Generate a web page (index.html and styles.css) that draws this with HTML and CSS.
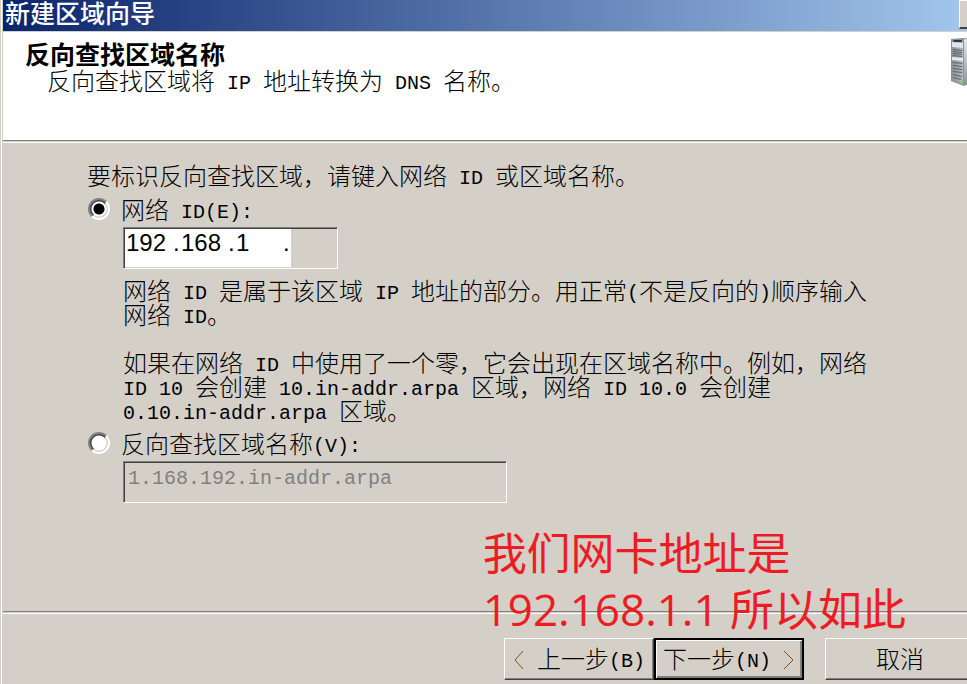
FILE: index.html
```
<!DOCTYPE html>
<html lang="zh-CN">
<head>
<meta charset="UTF-8">
<meta name="viewport" content="width=device-width, initial-scale=1.0">
<title>新建区域向导</title>
<link rel="stylesheet" href="styles.css">
</head>
<body>
<div class="wizard">
  <div class="titlebar">
    <span class="title">新建区域向导</span>
    <button class="close" type="button" aria-label="关闭"></button>
  </div>

  <header class="banner">
    <div>
      <h1>反向查找区域名称</h1>
      <p>反向查找区域将<span class="en"> IP </span>地址转换为<span class="en"> DNS </span>名称。</p>
    </div>
    <svg class="server" width="32" height="48" viewBox="0 0 32 48">
      <defs>
        <linearGradient id="front" x1="0" y1="0" x2="1" y2="0">
          <stop offset="0" stop-color="#8b9299"/>
          <stop offset="1" stop-color="#b4bac0"/>
        </linearGradient>
        <linearGradient id="side" x1="0" y1="0" x2="0" y2="1">
          <stop offset="0" stop-color="#e4eaea"/>
          <stop offset="1" stop-color="#8c9396"/>
        </linearGradient>
      </defs>
      <path d="M0 1L13 0L26 2V43L13 48L0 43Z" fill="#8a9298"/>
      <path d="M1 2L12 2V46L1 42Z" fill="url(#front)"/>
      <path d="M13 1L26 3V42L13 47Z" fill="url(#side)"/>
      <path d="M1 4L12 5V10L1 9Z" fill="#dfe5e8"/>
      <path d="M2 2H11V4H3Z" fill="#2d3c48"/>
      <path d="M1 19L12 20V23L1 22Z" fill="#e8ecee"/>
      <g stroke="#59626a" stroke-width="1">
        <path d="M2 11.5L11 12.5M2 13.5L11 14.5M2 15.5L11 16.5M2 17.5L11 18.5"/>
        <path d="M2 24.5L11 25.5M2 27.5L11 28.5M2 30.5L11 31.5M2 33.5L11 34.5M2 36.5L11 38.5M2 39.5L10 41.5"/>
      </g>
      <path d="M10 43H12V45H10Z" fill="#5cff00"/>
    </svg>
  </header>

  <main>
    <p class="intro">要标识反向查找区域，请键入网络<span class="en"> ID </span>或区域名称。</p>

    <div class="option">
      <input type="radio" name="zone" id="by-id" checked>
      <label for="by-id">网络<span class="en"> ID(E):</span></label>
    </div>
    <div class="detail">
      <div class="ip-field" role="group" aria-label="网络 ID">
        <span class="octets">
          <input type="text" value="192" maxlength="3" aria-label="1"><span>.</span>
          <input type="text" value="168" maxlength="3" aria-label="2"><span>.</span>
          <input type="text" value="1" maxlength="3" aria-label="3"><span>.</span>
        </span>
        <input type="text" maxlength="3" aria-label="4" disabled>
      </div>
      <p>网络<span class="en"> ID </span>是属于该区域<span class="en"> IP </span>地址的部分。用正常<span class="en">(</span>不是反向的<span class="en">)</span>顺序输入网络<span class="en"> ID</span>。</p>
      <p>如果在网络<span class="en"> ID </span>中使用了一个零，它会出现在区域名称中。例如，网络<span class="en"> ID 10 </span>会创建<span class="en"> 10.in-addr.arpa </span>区域，网络<span class="en"> ID 10.0 </span>会创建<span class="en"> 0.10.in-addr.arpa </span>区域。</p>
    </div>

    <div class="option">
      <input type="radio" name="zone" id="by-name">
      <label for="by-name">反向查找区域名称<span class="en">(V):</span></label>
    </div>
    <div class="detail">
      <input class="zone-name" type="text" value="1.168.192.in-addr.arpa" aria-label="反向查找区域名称" disabled>
    </div>
  </main>

  <footer>
    <div class="steps">
      <button type="button"><svg class="arrow" width="12" height="18" viewBox="0 0 12 18"><path d="M10 0L2 9L10 18"/></svg><span class="en"> </span>上一步<span class="en">(B)</span></button>
      <button class="default" type="button">下一步<span class="en">(N) </span><svg class="arrow" width="12" height="18" viewBox="0 0 12 18"><path d="M1 0L10 9L1 18"/></svg></button>
    </div>
    <button type="button">取消</button>
    <p class="note">我们网卡地址是<br>192.168.1.1 所以如此</p>
  </footer>
</div>
</body>
</html>
```

FILE: styles.css
```
* {
  box-sizing: border-box;
}

body {
  margin: 0;
  overflow: hidden;
  background: #d4d0c8;
  color: #000;
  font-family: "Noto Sans CJK SC", sans-serif;
  font-size: 24px;
  font-weight: 300;
  line-height: 24px;
}

h1, p {
  margin: 0;
}

button, input {
  font: inherit;
  color: inherit;
  margin: 0;
}

/* latin text, half as wide as a chinese character */
.en {
  font-family: "Liberation Mono", monospace;
  font-size: 20px;
  font-weight: 400;
  line-height: 0;
  vertical-align: 1px;
  white-space: pre-wrap;
}

/* the window runs past the right edge of the screen */
.wizard {
  display: flex;
  flex-direction: column;
  min-height: 100vh;
  margin: 0 -24px 0 1px;
  border-left: 1px solid #fff;
  padding-left: 1px;
}

.titlebar {
  display: flex;
  justify-content: space-between;
  height: 31px;
  padding: 0 8px 0 2px;
  background: linear-gradient(to right, #0a246a, #a6caf0);
  color: #fff;
}

.title {
  font-size: 25px;
  font-weight: 500;
}

.close {
  width: 24px;
  height: 29px;
  padding: 0;
  background: #d4d0c8;
  border: 1px solid;
  border-color: #fff #404040 #404040 #fff;
  border-bottom-width: 2px;
}

.banner {
  display: flex;
  justify-content: space-between;
  height: 110px;
  padding: 6px 8px 0 22px;
  background: #fff;
  border-top: 1px solid #d4d0c8;
  border-bottom: 1px solid #808080;
}

.banner h1 {
  font-size: 25px;
  font-weight: 700;
  line-height: 30px;
}

.banner p {
  padding-left: 22px;
}

main {
  flex: 1;
  padding: 21px 24px 0 84px;
  border-top: 1px solid #d4d0c8;
  box-shadow: inset 0 1px #fff;
}

.intro {
  margin-bottom: 10px;
}

.option {
  display: flex;
  align-items: center;
  gap: 11px;
  margin-bottom: 6px;
}

.option input {
  appearance: none;
  width: 22px;
  height: 22px;
  margin-left: 1px;
  border: 2px solid;
  border-color: #808080 #fff #fff #808080;
  border-radius: 50%;
  background: radial-gradient(circle, #fff 7px, transparent 8px), linear-gradient(135deg, #404040 50%, #d4d0c8 50%);
}

.option input:checked {
  background: radial-gradient(circle, #000 5px, #fff 6px, #fff 7px, transparent 8px), linear-gradient(135deg, #404040 50%, #d4d0c8 50%);
}

.detail {
  padding-left: 36px;
}

.detail p {
  max-width: 750px;
  margin-bottom: 24px;
}

.detail p:last-child {
  margin-bottom: 9px;
}

.ip-field, .zone-name {
  height: 42px;
  border: 1px solid;
  border-color: #808080 #fff #fff #808080;
  box-shadow: inset 1px 1px #404040;
}

.ip-field {
  display: flex;
  width: 215px;
  margin-bottom: 9px;
  padding: 1px 0 1px 1px;
  font-family: "Liberation Sans", sans-serif;
  font-weight: 400;
}

.octets {
  display: flex;
  padding: 1px 0 0 1px;
  background: #fff;
}

.ip-field input {
  width: 47px;
  height: 26px;
  padding: 0;
  border: 0;
  background: transparent;
}

.ip-field span span {
  width: 8px;
  line-height: 26px;
}

.zone-name {
  width: 384px;
  padding: 0 4px 8px;
  background: #d4d0c8;
  color: #808080;
  font-family: "Liberation Mono", monospace;
  font-size: 20px;
  font-weight: 400;
}

footer {
  position: relative;
  display: flex;
  justify-content: flex-end;
  gap: 21px;
  height: 73px;
  padding: 26px 16px 0 0;
  border-top: 1px solid #808080;
  box-shadow: inset 0 1px #d4d0c8, inset 0 2px #fff;
}

.steps {
  display: flex;
}

footer button {
  width: 150px;
  height: 42px;
  padding: 0 0 3px;
  background: #d4d0c8;
  border: 1px solid;
  border-color: #fff #404040 #404040 #fff;
  box-shadow: inset -1px -1px #808080;
  white-space: nowrap;
}

footer .default {
  border: 2px solid #000;
  box-shadow: inset 1px 1px #fff, inset -2px -2px #808080;
}

.arrow {
  vertical-align: -1px;
  fill: none;
  stroke: #8a4a14;
  stroke-width: 1;
}

/* red remark laid over the dialog */
.note {
  position: absolute;
  right: 85px;
  bottom: 47px;
  color: #ed1c24;
  font-family: "Open Sans", "Noto Sans CJK SC", sans-serif;
  font-size: 44px;
  font-weight: 400;
  line-height: 56px;
}
```
